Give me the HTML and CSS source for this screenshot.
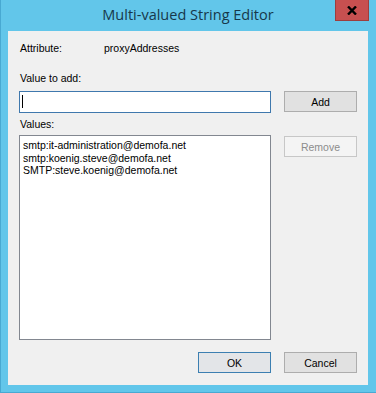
FILE: index.html
```html
<!DOCTYPE html>
<html lang="en">
<head>
  <meta charset="UTF-8" />
  <meta name="viewport" content="width=device-width, initial-scale=1.0"/>
  <title>Multi-valued String Editor</title>
  <link rel="stylesheet" href="styles.css">
</head>
<body>

  <div class="window">
    <header class="titlebar">
      <span></span>
      <h1 class="title">Multi-valued String Editor</h1>
      <button class="close" aria-label="Close">
        <svg width="10" height="9" viewBox="0 0 10 9">
          <path d="M1 0.5 L9 8.5 M9 0.5 L1 8.5" stroke="#000" stroke-width="2.4" fill="none"/>
        </svg>
      </button>
    </header>

    <main class="client">
      <div class="attr-row">
        <span class="attr-label">Attribute:</span>
        <span>proxyAddresses</span>
      </div>

      <label class="label label-add">Value to add:</label>
      <div class="row">
        <div class="textbox"><span class="caret"></span></div>
        <button class="btn">Add</button>
      </div>

      <label class="label label-values">Values:</label>
      <div class="row row-list">
        <ul class="list">
          <li>smtp:it-administration@demofa.net</li>
          <li>smtp:koenig.steve@demofa.net</li>
          <li>SMTP:steve.koenig@demofa.net</li>
        </ul>
        <button class="btn btn-remove" disabled>Remove</button>
      </div>

      <footer class="footer">
        <button class="btn btn-default">OK</button>
        <button class="btn">Cancel</button>
      </footer>
    </main>
  </div>

</body>
</html>
```

FILE: styles.css
```css
* {
  margin: 0;
  padding: 0;
  box-sizing: border-box;
}

body {
  width: 376px;
  height: 393px;
  overflow: hidden;
  background: #62c6ea;
  font-family: 'Liberation Sans', Arial, sans-serif;
  font-size: 10.5px;
  color: #000;
}

.window {
  height: 393px;
  border-left: 1px solid #48a9d2;
  border-bottom: 1px solid #48a9d2;
}

.titlebar {
  height: 31px;
  display: grid;
  grid-template-columns: 1fr auto 1fr;
  align-items: start;
}

.title {
  font-family: 'Open Sans', 'Noto Sans', sans-serif;
  font-weight: normal;
  font-size: 14.5px;
  color: #17384a;
  line-height: 30px;
  margin-left: -1px;
}

.close {
  justify-self: end;
  width: 34px;
  height: 21px;
  margin-right: 7px;
  background: #c75050;
  border: 1px solid #9d3e3e;
  border-top: none;
  display: flex;
  align-items: center;
  justify-content: center;
}

.client {
  margin-left: 7px;
  width: 360px;
  height: 354px;
  background: #f0f0f0;
  padding: 11px 11px 0;
  display: flex;
  flex-direction: column;
}

.attr-row {
  display: flex;
  line-height: 13px;
  height: 13px;
  padding-left: 1px;
}

.attr-label {
  width: 84px;
}

.label {
  display: block;
  line-height: 13px;
  height: 13px;
  padding-left: 1px;
}

.label-add {
  margin-top: 17px;
}

.label-values {
  margin-top: 5px;
}

.row {
  display: flex;
  gap: 13px;
  margin-top: 6px;
  align-items: flex-start;
}

.row-list {
  margin-top: 4px;
}

.textbox {
  width: 252px;
  height: 22px;
  background: #fff;
  border: 1px solid #3f78ad;
  padding: 3px 0 0 2px;
}

.caret {
  display: block;
  width: 1px;
  height: 13px;
  background: #000;
}

.list {
  list-style: none;
  width: 252px;
  height: 205px;
  background: #fff;
  border: 1px solid #828790;
  padding: 3px 3px 0;
  line-height: 12.5px;
}

.btn {
  width: 73px;
  height: 21px;
  font: inherit;
  color: #000;
  background: #e1e1e1;
  border: 1px solid #adadad;
  text-align: center;
}

.btn-remove {
  margin-top: 1px;
  background: #f4f4f4;
  border-color: #c7c7c7;
  color: #8c8c8c;
}

.btn-default {
  border-color: #3c7fb1;
  background: #e3e5e8;
}

.footer {
  display: flex;
  justify-content: flex-end;
  gap: 13px;
  margin-top: 12px;
}
```
